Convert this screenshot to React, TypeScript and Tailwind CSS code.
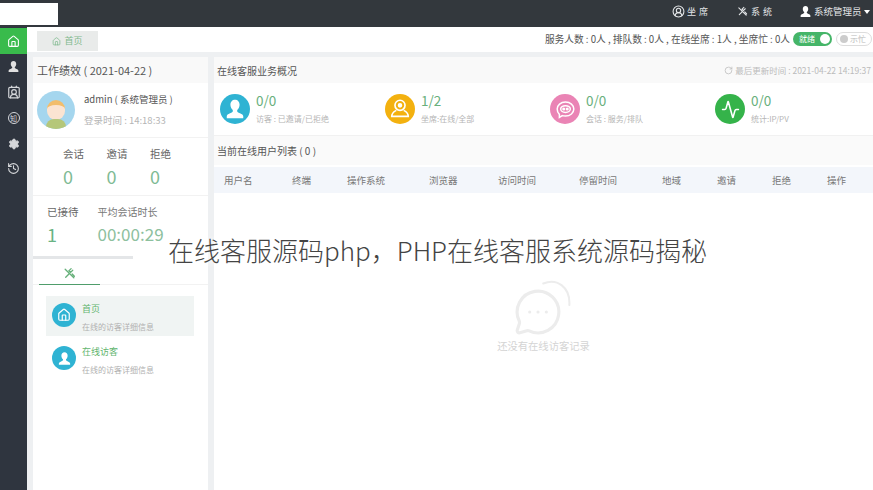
import { Activity, CircleUserRound, Home, RotateCw, Settings, History, ContactRound, MessageCircleMore } from "lucide-react";

const font = { fontFamily: '"Noto Sans CJK SC", "Liberation Sans", sans-serif' };

function Person({ className = "w-4 h-4 text-white" }: { className?: string }) {
  return (
    <svg viewBox="0 0 24 24" className={className} fill="currentColor">
      <path d="M12 2c-3 0-5 2.300-5 5.400 0 2.400 1.100 4.600 2.600 5.800v1.300c0 .8-1 1.300-3 2.100C4.300 17.500 3 18.400 3 20v2h18v-2c0-1.600-1.300-2.500-3.600-3.400-2-.8-3-1.300-3-2.100v-1.300c1.500-1.200 2.600-3.400 2.600-5.800C17 4.300 15 2 12 2z" />
    </svg>
  );
}

function Tools({ className = "w-3 h-3" }: { className?: string }) {
  return (
    <svg viewBox="0 0 24 24" className={className} fill="none" stroke="currentColor" strokeWidth="2.400" strokeLinecap="round">
      <path d="M4 4l16 16M15 3l-4 4 3 3 4-4M5 19l6-6M17 13l4 4" />
    </svg>
  );
}

function Agent() {
  return (
    <svg viewBox="0 0 24 24" className="w-[22px] h-[22px] text-white" fill="none" stroke="currentColor" strokeWidth="1.800">
      <circle cx="12" cy="8" r="5.500" />
      <circle cx="12" cy="8" r="1.600" fill="currentColor" />
      <path d="M8 13.500C5 15 3 16.500 3 20h18c0-3.500-2-5-5-6.500" />
    </svg>
  );
}

function Swirl() {
  return (
    <svg viewBox="0 0 24 24" className="w-[21px] h-[21px] text-white" fill="none" stroke="currentColor" strokeWidth="1.700">
      <path d="M12 3.500c5.500 0 9.500 3.500 9.500 8s-4 8-9.500 8c-1.300 0-2.500-.2-3.600-.5L5 21v-3.400c-1.600-1.500-2.500-3.600-2.500-6.100 0-4.500 4-8 9.500-8z" />
      <ellipse cx="12" cy="11.500" rx="5.500" ry="3.800" />
      <circle cx="10" cy="11.500" r=".9" fill="currentColor" />
      <circle cx="14" cy="11.500" r=".9" fill="currentColor" />
    </svg>
  );
}

function Stat({ color, icon, value, label }: { color: string; icon: React.ReactNode; value: string; label: string }) {
  return (
    <div className="flex items-center gap-[6px]">
      <div className={`w-[30px] h-[30px] rounded-full flex items-center justify-center ${color}`}>{icon}</div>
      <div className="flex flex-col -mt-[2px]">
        <span className="text-[13.500px] leading-[18px] text-[#68b07c]">{value}</span>
        <span className="text-[8px] leading-[12px] mt-[4px] text-[#b5b5b5]">{label}</span>
      </div>
    </div>
  );
}

function Metric({ label, value }: { label: string; value: string }) {
  return (
    <div className="flex flex-col items-start w-[22px]">
      <span className="text-[10.500px] leading-[14px] text-[#666]">{label}</span>
      <span className="text-[18px] leading-[24px] mt-[3px] text-[#7fbb95]">{value}</span>
    </div>
  );
}

function MenuItem({ active, icon, title }: { active?: boolean; icon: React.ReactNode; title: string }) {
  return (
    <div className={`h-[40px] flex items-start gap-[6px] pl-[6px] pt-[7px] ${active ? "bg-[#f0f4f3]" : ""}`}>
      <div className="w-[24px] h-[24px] rounded-full bg-[#2fb3d3] flex items-center justify-center">{icon}</div>
      <div className="flex flex-col">
        <span className="text-[9px] leading-[12px] text-[#62b56e]">{title}</span>
        <span className="text-[8px] leading-[12px] mt-[6px] text-[#b0b0b0]">在线的访客详细信息</span>
      </div>
    </div>
  );
}

export default function App() {
  const heads = ["用户名", "终端", "操作系统", "浏览器", "访问时间", "停留时间", "地域", "邀请", "拒绝", "操作"];
  return (
    <div style={font} className="relative w-[873px] h-[490px] overflow-hidden bg-white flex flex-col">
      <header className="h-[27px] shrink-0 bg-[#33383d] flex items-center text-[#e4e6e8]">
        <div className="w-[58px] h-[22px] bg-white" />
        <div className="ml-auto flex items-center text-[9px] -mt-[4px]">
          <div className="flex items-center gap-[2px] w-[65px]">
            <CircleUserRound className="w-[13px] h-[13px]" />
            <span className="tracking-[3px]">坐席</span>
          </div>
          <div className="flex items-center gap-[3px] w-[62px]">
            <Tools className="w-[11px] h-[11px]" />
            <span className="tracking-[3px]">系统</span>
          </div>
          <div className="flex items-center gap-[2px] w-[74px]">
            <Person className="w-[13px] h-[13px] text-white" />
            <span className="text-[9.500px]">系统管理员</span>
            <span className="w-0 h-0 border-x-[3px] border-x-transparent border-t-[4px] border-t-white" />
          </div>
        </div>
      </header>

      <div className="flex-1 flex min-h-0">
        <aside className="w-[27px] shrink-0 bg-[#2f353f] flex flex-col items-center text-[#d5d7da]">
          <div className="w-full h-[26px] mt-[1px] bg-[#39bb4c] flex items-center justify-center text-white">
            <Home className="w-[13px] h-[13px]" />
          </div>
          <div className="h-[25px] flex items-center"><Person className="w-[13px] h-[13px] text-[#e0e0e0]" /></div>
          <div className="h-[25px] flex items-center"><ContactRound className="w-[14px] h-[14px]" /></div>
          <div className="h-[27px] flex items-center"><span className="w-[12px] h-[12px] rounded-full border border-[#d5d7da] text-[7px] leading-[10px] text-center">知</span></div>
          <div className="h-[25px] flex items-center"><Settings className="w-[12px] h-[12px] fill-[#d5d7da] text-[#d5d7da]" /></div>
          <div className="h-[25px] flex items-center"><History className="w-[13px] h-[13px]" /></div>
        </aside>

        <main className="flex-1 min-w-0 flex flex-col bg-[#eef0f2]">
          <div className="h-[25px] shrink-0 bg-white flex items-center pl-[10px] pr-[1px]">
            <div className="mt-[3px] w-[61px] h-[20px] bg-[#e9ebea] flex items-center justify-center gap-[3px] text-[9px] text-[#7fb98d]">
              <Home className="w-[9px] h-[9px]" />首页
            </div>
            <div className="ml-auto flex items-center text-[9.700px] text-[#555]">
              <span className="whitespace-nowrap">服务人数 : 0人 , 排队数 : 0人 , 在线坐席 : 1人 , 坐席忙 : 0人</span>
              <span className="ml-[3px] w-[39px] h-[14px] rounded-full bg-[#45b568] flex items-center justify-between pl-[6px] pr-[2px] text-white text-[8px]">
                就绪<span className="w-[10px] h-[10px] rounded-full bg-white" />
              </span>
              <span className="ml-[4px] w-[36px] h-[14px] rounded-full border border-[#ddd] flex items-center gap-[2px] pl-[3px] text-[#bbb] text-[8px]">
                <span className="w-[8px] h-[8px] rounded-full bg-[#ccc]" />示忙
              </span>
            </div>
          </div>

          <div className="flex-1 min-h-0 flex pt-[5px] pl-[6px] gap-[6px]">
            <section className="w-[175px] shrink-0 bg-white flex flex-col">
              <div className="h-[26px] shrink-0 bg-[#f9f9f9] flex items-center pl-[4px] text-[11px] text-[#555]">工作绩效 ( 2021-04-22 )</div>
              <div className="h-[55px] shrink-0 flex items-center pl-[4px] gap-[9px] border-b border-[#f2f2f2]">
                <div className="w-[38px] h-[38px] rounded-full bg-[#a5d6ee] relative overflow-hidden">
                  <div className="absolute left-[10px] top-[9px] w-[18px] h-[20px] rounded-[9px] bg-[#fbe4d2] border-t-[5px] border-t-[#f2bd6c]" />
                  <div className="absolute left-[9px] top-[28px] w-[20px] h-[12px] rounded-t-lg bg-[#b5c77a]" />
                </div>
                <div className="flex flex-col">
                  <span className="text-[9.500px] leading-[13px] text-[#555]">admin ( 系统管理员 )</span>
                  <span className="text-[9.500px] leading-[13px] mt-[8px] text-[#b5b5b5]">登录时间 : 14:18:33</span>
                </div>
              </div>
              <div className="h-[58px] shrink-0 flex items-start pt-[9px] pl-[30px] gap-[21.500px] border-b border-[#f2f2f2]">
                <Metric label="会话" value="0" />
                <Metric label="邀请" value="0" />
                <Metric label="拒绝" value="0" />
              </div>
              <div className="h-[58px] shrink-0 flex items-start pt-[9px] pl-[14px] gap-[19px]">
                <div className="flex flex-col">
                  <span className="text-[10.500px] leading-[14px] text-[#666]">已接待</span>
                  <span className="text-[18px] leading-[24px] mt-[3px] text-[#69b384]">1</span>
                </div>
                <div className="flex flex-col">
                  <span className="text-[10px] leading-[14px] text-[#777]">平均会话时长</span>
                  <span className="text-[17px] leading-[24px] mt-[3px] text-[#8dc09e]">00:00:29</span>
                </div>
              </div>
              <div className="h-[3px] w-[100px] shrink-0 bg-[#e4e6e8] mt-[2px]" />
              <div className="h-[26px] shrink-0 border-b border-[#f2f2f2]">
                <div className="ml-[6px] w-[61px] h-[26px] border-b border-[#4f9d6b] flex items-center justify-center pt-[4px] text-[#66b07a]">
                  <Tools className="w-[13px] h-[13px]" />
                </div>
              </div>
              <div className="flex flex-col gap-[3px] pt-[11px] pl-[13px] pr-[14px]">
                <MenuItem active icon={<Home className="w-[14px] h-[14px] text-white" />} title="首页" />
                <MenuItem icon={<Person className="w-[15px] h-[15px] text-white" />} title="在线访客" />
              </div>
            </section>

            <section className="flex-1 min-w-0 bg-white flex flex-col">
              <div className="h-[26px] shrink-0 bg-[#f9f9f9] flex items-center justify-between pl-[3px] pr-[2px]">
                <span className="text-[10px] text-[#555]">在线客服业务概况</span>
                <span className="flex items-center gap-[2px] text-[8.500px] text-[#bbb]">
                  <RotateCw className="w-[9px] h-[9px]" />最后更新时间 : 2021-04-22 14:19:37
                </span>
              </div>
              <div className="h-[53px] shrink-0 grid grid-cols-[165px_165px_165px_1fr] items-center pl-[6px] border-b border-[#f1f1f1]">
                <Stat color="bg-[#2fb3d3]" icon={<Person className="w-[22px] h-[22px] text-white" />} value="0/0" label="访客 : 已邀请/已拒绝" />
                <Stat color="bg-[#f3b10f]" icon={<Agent />} value="1/2" label="坐席:在线/全部" />
                <Stat color="bg-[#ea84b5]" icon={<Swirl />} value="0/0" label="会话 : 服务/排队" />
                <Stat color="bg-[#35b34a]" icon={<Activity className="w-[19px] h-[19px] text-white" />} value="0/0" label="统计:IP/PV" />
              </div>
              <div className="h-[29px] shrink-0 bg-[#fafafa] flex items-center pl-[3px] text-[10px] text-[#555]">当前在线用户列表 ( 0 )</div>
              <div className="mt-[2px] h-[26px] shrink-0 bg-[#f3f6fb] grid grid-cols-[68px_55px_82px_69px_81px_83px_55px_55px_55px_1fr] items-center pl-[10px] text-[9.500px] text-[#777]">
                {heads.map((h) => <span key={h}>{h}</span>)}
              </div>
              <div className="flex-1 flex flex-col items-center pt-[86px] text-[#ececec]">
                <div className="relative w-[62px] h-[58px]">
                  <MessageCircleMore className="absolute left-0 bottom-0 w-[50px] h-[50px]" strokeWidth={1.500} />
                  <svg viewBox="0 0 30 30" className="absolute right-0 top-0 w-[34px] h-[34px]" fill="none" stroke="currentColor" strokeWidth="1.800">
                    <path d="M2 4c12-5 24 3 23 19" strokeLinecap="round" />
                  </svg>
                </div>
                <span className="mt-[1px] text-[10.300px] text-[#d4d4d4]">还没有在线访客记录</span>
              </div>
            </section>
          </div>
        </main>
      </div>

      <div className="absolute left-[168px] top-[234px] whitespace-nowrap text-[26px] leading-[32px] font-light text-[#444]" style={{ textShadow: "0 0 8px #fff, 0 0 8px #fff" }}>
        在线客服源码php，PHP在线客服系统源码揭秘
      </div>
    </div>
  );
}
